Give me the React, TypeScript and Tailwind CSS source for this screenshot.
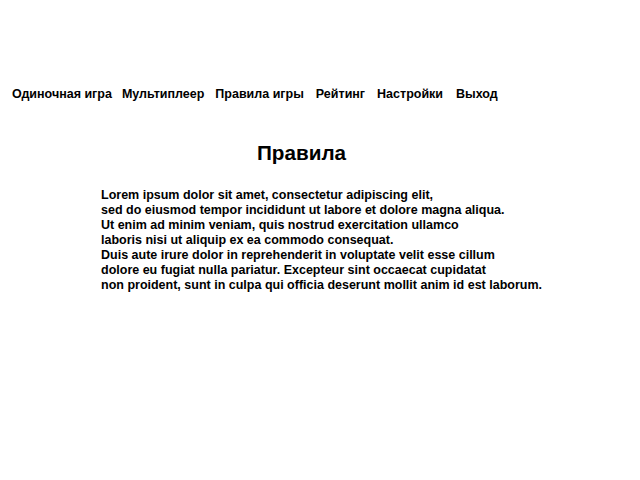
const menu = [
  { label: "Одиночная игра", cls: "" },
  { label: "Мультиплеер", cls: "ml-[10px]" },
  { label: "Правила игры", cls: "ml-[11px]" },
  { label: "Рейтинг", cls: "ml-[12px]" },
  { label: "Настройки", cls: "ml-[12px]" },
  { label: "Выход", cls: "ml-[13px]" },
];

const lines = [
  "Lorem ipsum dolor sit amet, consectetur adipiscing elit,",
  "sed do eiusmod tempor incididunt ut labore et dolore magna aliqua.",
  "Ut enim ad minim veniam, quis nostrud exercitation ullamco",
  "laboris nisi ut aliquip ex ea commodo consequat.",
  "Duis aute irure dolor in reprehenderit in voluptate velit esse cillum",
  "dolore eu fugiat nulla pariatur. Excepteur sint occaecat cupidatat",
  "non proident, sunt in culpa qui officia deserunt mollit anim id est laborum.",
];

export default function App() {
  return (
    <div className="w-[640px] h-[480px] bg-white text-black font-['Liberation_Sans',Arial,sans-serif] font-bold">
      <nav className="flex pl-[12px] pt-[87px] text-[12.5px] leading-[15px]">
        {menu.map((item) => (
          <span key={item.label} className={item.cls}>
            {item.label}
          </span>
        ))}
      </nav>
      <h1 className="mt-[39px] w-[603px] text-center text-[20.7px] leading-[23px]">Правила</h1>
      <p className="mt-[24px] pl-[101px] text-[12.5px] leading-[15px]">
        {lines.map((line) => (
          <span key={line} className="block">
            {line}
          </span>
        ))}
      </p>
    </div>
  );
}
